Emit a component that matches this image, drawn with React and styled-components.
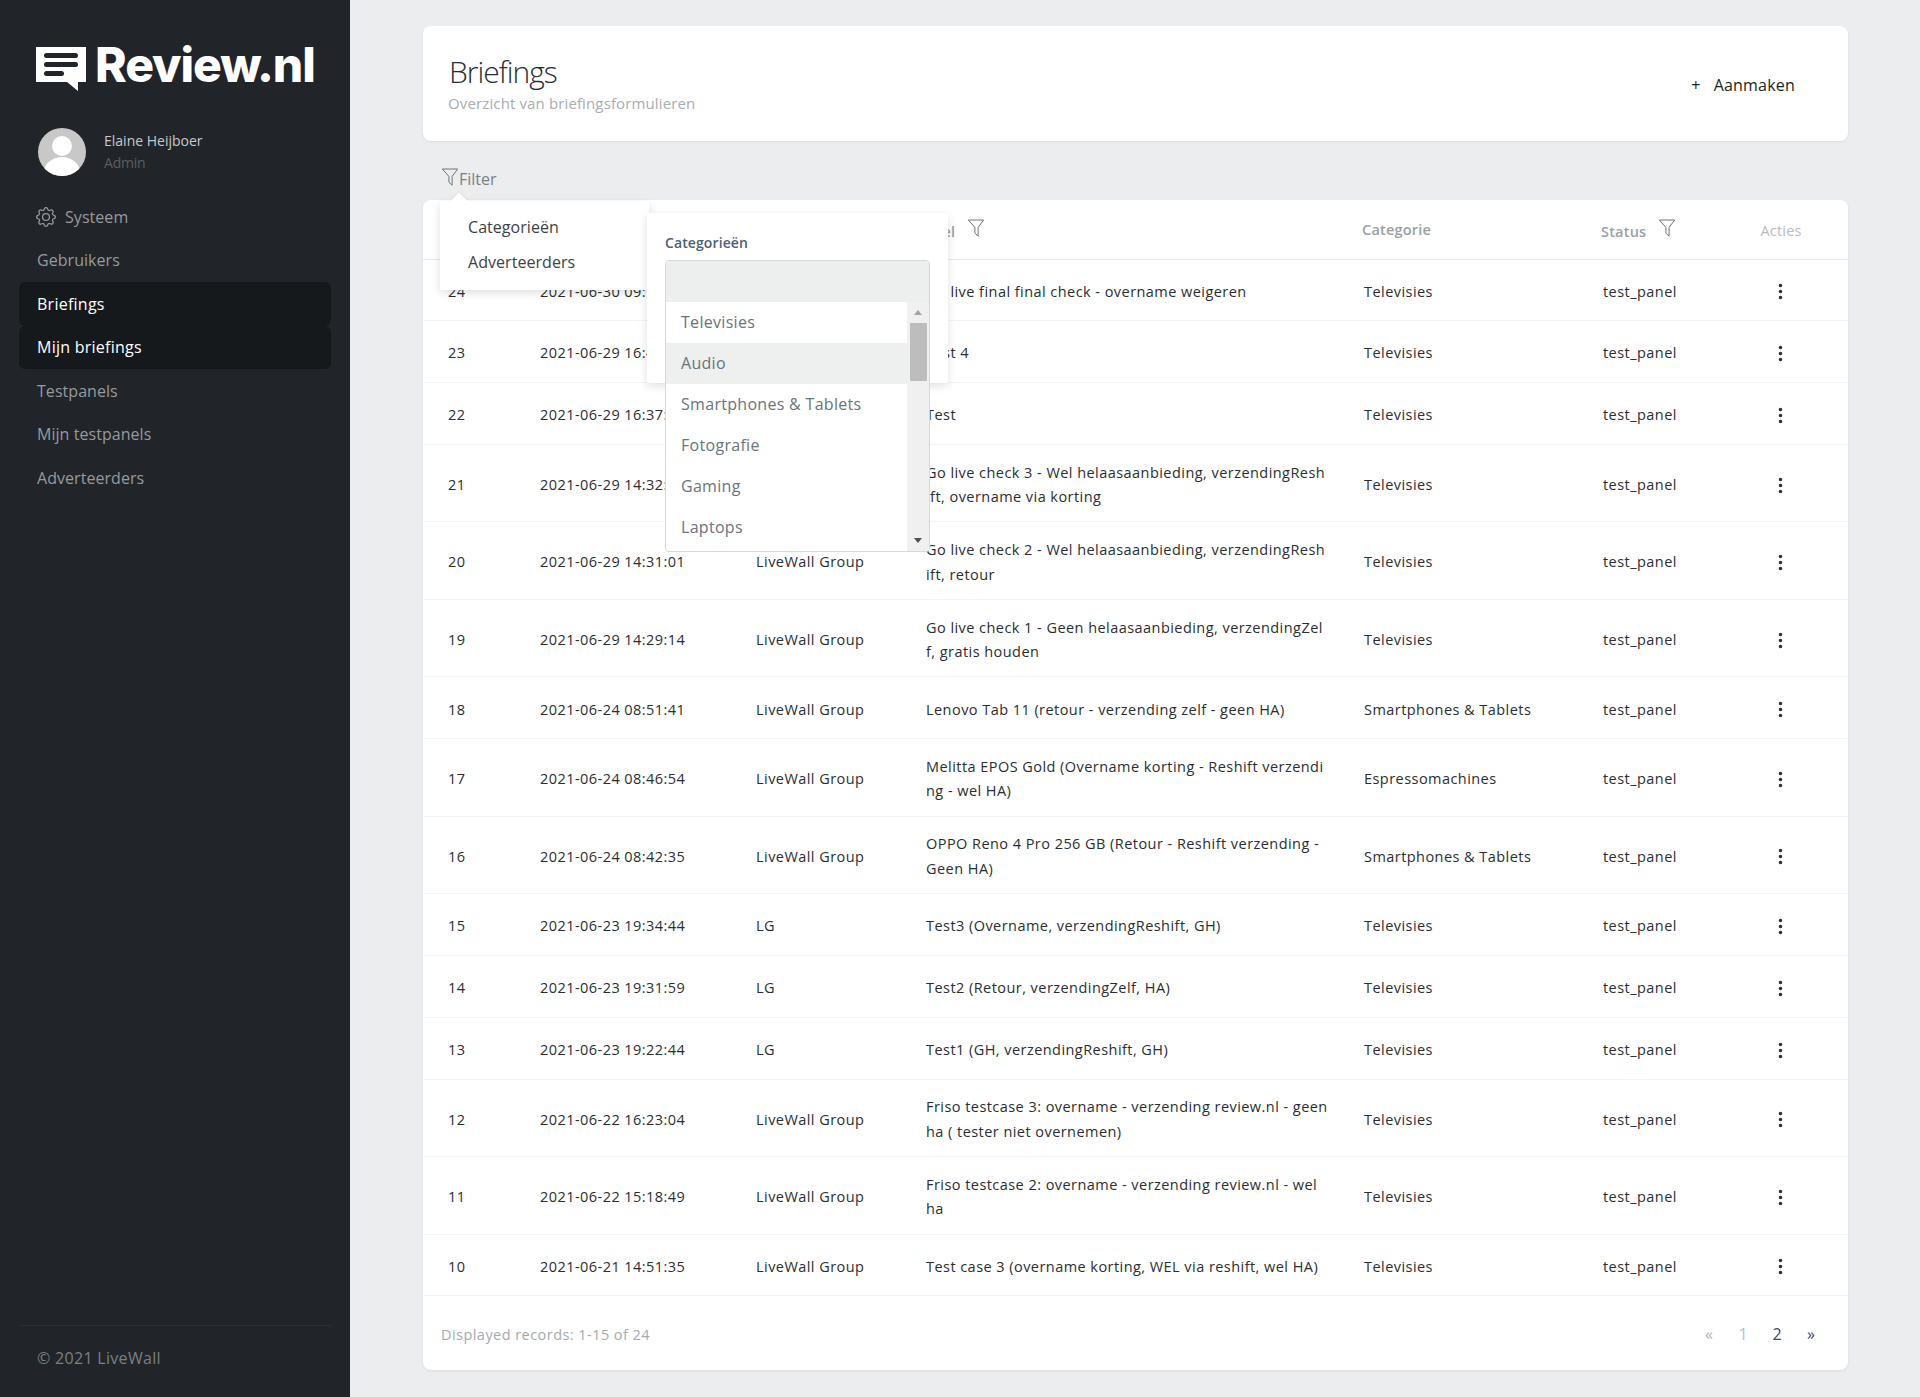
import React from 'react';
import styled, { createGlobalStyle } from 'styled-components';
import { BsGear, BsThreeDotsVertical } from 'react-icons/bs';

const FONT = '"Open Sans", "Noto Sans", sans-serif';

const GlobalStyle = createGlobalStyle`
  html, body {
    margin: 0;
    background: #ecedef;
    font-family: ${FONT};
    font-size: 14px;
    color: #2a2e33;
  }
  * { box-sizing: border-box; }
`;

const Shell = styled.div`
  display: flex;
  min-height: 1397px;
`;

/* sidebar */
const Sidebar = styled.aside`
  width: 350px;
  flex: none;
  background: #212529;
  display: flex;
  flex-direction: column;
  padding: 0 19px;
`;

const Brand = styled.div`
  display: flex;
  align-items: flex-start;
  gap: 9px;
  padding: 46px 0 0 17px;
  height: 128px;
`;

const BrandName = styled.span`
  font-family: Inter, sans-serif;
  font-weight: 800;
  font-size: 48px;
  line-height: 38px;
  color: #fff;
  letter-spacing: -1.1px;
`;

const UserBlock = styled.div`
  display: flex;
  align-items: center;
  gap: 18px;
  padding-left: 19px;
  height: 48px;
`;

const Avatar = styled.svg`
  width: 48px;
  height: 48px;
  flex: none;
`;

const UserName = styled.div`
  font-size: 14px;
  line-height: 22px;
  color: #c6c9cc;
  letter-spacing: 0;
`;

const UserRole = styled.div`
  font-size: 14px;
  line-height: 22px;
  color: #5a5e63;
  letter-spacing: -0.2px;
`;

const Nav = styled.nav`
  display: flex;
  flex-direction: column;
  margin-top: 19px;
`;

const NavItem = styled.a`
  display: flex;
  align-items: center;
  gap: 9px;
  height: 43.5px;
  padding-left: 18px;
  border-radius: 6px;
  font-size: 16px;
  letter-spacing: ${p => (p.$active ? 0.25 : 0.05)}px;
  color: ${p => (p.$active ? '#fff' : '#969a9e')};
  background: ${p => (p.$active ? '#16191c' : 'transparent')};

  svg { margin-left: -1px; }
`;

const SideFooter = styled.div`
  margin-top: auto;
  margin-bottom: 27px;
  border-top: 1px solid #2c3035;
  padding: 20px 0 0 18px;
  line-height: 24px;
  font-size: 16px;
  letter-spacing: 0.3px;
  color: #7b7f83;
`;

/* main column */
const Main = styled.main`
  flex: 1;
  min-width: 0;
  padding: 26px 72px 27px 73px;
  display: flex;
  flex-direction: column;
`;

const Card = styled.section`
  background: #fff;
  border-radius: 8px;
  box-shadow: 0 1px 3px rgba(0, 0, 0, 0.07);
`;

const HeaderCard = styled(Card)`
  height: 115px;
  padding: 0 53px 0 25px;
  display: flex;
  align-items: center;
  justify-content: space-between;
`;

const Title = styled.h1`
  margin: -1px 0 1px 1px;
  font-size: 30px;
  line-height: 38px;
  font-weight: 300;
  color: #2a2e33;
  letter-spacing: -1px;
`;

const Subtitle = styled.div`
  font-size: 15px;
  line-height: 22px;
  color: #a7adb3;
  letter-spacing: 0.13px;
`;

const CreateButton = styled.button`
  display: flex;
  align-items: center;
  gap: 13px;
  border: 0;
  background: none;
  padding: 3px 0 0;
  font: inherit;
  font-size: 16px;
  letter-spacing: 0.2px;
  color: #1c1f22;
`;

const FilterBar = styled.div`
  position: relative;
  z-index: 2;
  height: 59px;
  display: flex;
  align-items: flex-end;
  padding: 0 0 9px 18px;
`;

const FilterToggle = styled.div`
  display: flex;
  align-items: center;
  font-size: 16px;
  line-height: 24px;
  letter-spacing: 0;
  color: #7b8085;
`;

const FunnelIcon = styled.svg`
  width: 18px;
  height: 18px;
  flex: none;
  margin-top: ${p => p.$lift || 0}px;
`;

const FilterMenu = styled.div`
  position: absolute;
  left: 17px;
  top: 60px;
  width: 209px;
  height: 89px;
  padding: 9px 0 0 28px;
  background: #fff;
  border-radius: 2px;
  box-shadow: 0 3px 10px rgba(0, 0, 0, 0.13);

  &::before {
    content: '';
    position: absolute;
    left: 13px;
    top: -6px;
    width: 12px;
    height: 12px;
    background: #fff;
    transform: rotate(45deg);
    box-shadow: -1px -1px 2px rgba(0, 0, 0, 0.05);
  }
`;

const MenuEntry = styled.div`
  position: relative;
  font-size: 16px;
  line-height: 35px;
  letter-spacing: 0.05px;
  color: #3d4146;
`;

const SubMenu = styled.div`
  position: absolute;
  left: 207px;
  top: 12px;
  width: 301px;
  height: 170px;
  padding: 20px 18px 0;
  background: #fff;
  border-radius: 2px;
  box-shadow: 0 3px 10px rgba(0, 0, 0, 0.13);
`;

const FieldLabel = styled.label`
  display: block;
  font-size: 14px;
  line-height: 20px;
  font-weight: 600;
  letter-spacing: 0.1px;
  color: #4c6176;
`;

const ListBox = styled.div`
  margin-top: 7px;
  width: 265px;
  border: 1px solid #d6d9db;
  border-radius: 4px;
  background: #fff;
  overflow: hidden;
`;

const EmptyOption = styled.div`
  height: 41px;
  background: #edeeee;
`;

const ListBody = styled.div`
  display: flex;
`;

const Options = styled.div`
  flex: 1;
  padding-bottom: 3px;
`;

const Option = styled.div`
  height: 41px;
  line-height: 41px;
  padding-left: 15px;
  font-size: 16px;
  letter-spacing: 0.3px;
  color: #69747e;
  background: ${p => (p.$hover ? '#eeefef' : '#fff')};
`;

const ScrollTrack = styled.div`
  width: 22px;
  flex: none;
  background: #f0f0f0;
  display: flex;
  flex-direction: column;
  align-items: center;
`;

const ScrollArrow = styled.div`
  width: 0;
  height: 0;
  margin: ${p => (p.$down ? 'auto 0 8px' : '8px 0 0')};
  border-left: 4.5px solid transparent;
  border-right: 4.5px solid transparent;
  border-bottom: ${p => (p.$down ? '0' : '5px solid #a4a4a4')};
  border-top: ${p => (p.$down ? '5px solid #505050' : '0')};
`;

const ScrollThumb = styled.div`
  width: 17px;
  height: 58px;
  margin-top: 8px;
  background: #bdbdbd;
`;

/* table */
const TableCard = styled(Card)`
  flex: 1;
  display: flex;
  flex-direction: column;
`;

const Table = styled.table`
  width: 100%;
  table-layout: fixed;
  border-collapse: collapse;
`;

const Col = styled.col`
  width: ${p => p.$w}px;
`;

const Th = styled.th`
  height: 59px;
  padding: 0 0 0 23px;
  text-align: left;
  font-size: 14.5px;
  letter-spacing: 0.2px;
  font-weight: 600;
  color: #9aa0a6;
  border-bottom: 1px solid #e6e8ea;
`;

const ActionTh = styled(Th)`
  font-weight: 400;
  color: #b9bcc0;
  text-align: center;
  padding: 2px 20px 0 0;
`;

const ThInner = styled.span`
  display: inline-flex;
  align-items: flex-start;
  gap: 12px;
  line-height: 20px;
  span { padding-top: 5px; }
  svg { margin-top: 2px; }
`;

const Tr = styled.tr`
  height: ${p => (p.$tall ? 77.5 : 61.8)}px;
  border-bottom: 1px solid #f3f4f5;
`;

const Td = styled.td`
  padding: 4px 11px 0 25px;
  font-size: 14.5px;
  line-height: 24.5px;
  letter-spacing: 0.45px;
  color: #2a2e33;
  vertical-align: middle;
  word-break: break-all;
`;

const ActionTd = styled.td`
  text-align: center;
  padding: 7px 21px 0 0;
  color: #2d3135;
  font-size: 19px;
  line-height: 1;
`;

const TableFooter = styled.div`
  flex: 1;
  display: flex;
  align-items: center;
  justify-content: space-between;
  padding: 2px 31px 0 18px;
`;

const Records = styled.div`
  font-size: 14.5px;
  letter-spacing: 0.45px;
  color: #a5aab0;
`;

const Pager = styled.div`
  display: flex;
  gap: 22px;
`;

const PageLink = styled.a`
  width: 12px;
  text-align: center;
  font-size: 16px;
  color: ${p => p.$color};
`;

const rows = [
  [24, '2021-06-30 09:12:48', 'LiveWall Group', 'Go live final final check - overname weigeren', 'Televisies'],
  [23, '2021-06-29 16:44:02', 'LiveWall Group', 'Test 4', 'Televisies'],
  [22, '2021-06-29 16:37:19', 'LiveWall Group', 'Test', 'Televisies'],
  [21, '2021-06-29 14:32:40', 'LiveWall Group', 'Go live check 3 - Wel helaasaanbieding, verzendingReshift, overname via korting', 'Televisies', true],
  [20, '2021-06-29 14:31:01', 'LiveWall Group', 'Go live check 2 - Wel helaasaanbieding, verzendingReshift, retour', 'Televisies', true],
  [19, '2021-06-29 14:29:14', 'LiveWall Group', 'Go live check 1 - Geen helaasaanbieding, verzendingZelf, gratis houden', 'Televisies', true],
  [18, '2021-06-24 08:51:41', 'LiveWall Group', 'Lenovo Tab 11 (retour - verzending zelf - geen HA)', 'Smartphones & Tablets'],
  [17, '2021-06-24 08:46:54', 'LiveWall Group', 'Melitta EPOS Gold (Overname korting - Reshift verzending - wel HA)', 'Espressomachines', true],
  [16, '2021-06-24 08:42:35', 'LiveWall Group', 'OPPO Reno 4 Pro 256 GB (Retour - Reshift verzending - Geen HA)', 'Smartphones & Tablets', true],
  [15, '2021-06-23 19:34:44', 'LG', 'Test3 (Overname, verzendingReshift, GH)', 'Televisies'],
  [14, '2021-06-23 19:31:59', 'LG', 'Test2 (Retour, verzendingZelf, HA)', 'Televisies'],
  [13, '2021-06-23 19:22:44', 'LG', 'Test1 (GH, verzendingReshift, GH)', 'Televisies'],
  [12, '2021-06-22 16:23:04', 'LiveWall Group', 'Friso testcase 3: overname - verzending review.nl - geen ha ( tester niet overnemen)', 'Televisies', true],
  [11, '2021-06-22 15:18:49', 'LiveWall Group', 'Friso testcase 2: overname - verzending review.nl - wel ha', 'Televisies', true],
  [10, '2021-06-21 14:51:35', 'LiveWall Group', 'Test case 3 (overname korting, WEL via reshift, wel HA)', 'Televisies'],
];

const categories = ['Televisies', 'Audio', 'Smartphones & Tablets', 'Fotografie', 'Gaming', 'Laptops'];
const navItems = ['Gebruikers', 'Briefings', 'Mijn briefings', 'Testpanels', 'Mijn testpanels', 'Adverteerders'];

function Funnel({ lift }) {
  return (
    <FunnelIcon $lift={lift} viewBox="0 0 17 18" fill="none" stroke="#6f7479" strokeWidth="1">
      <path d="M.8 1h15.4L10.6 8.4v8.8L7.4 14.2V8.4L.8 1Z" />
    </FunnelIcon>
  );
}

function Logo() {
  return (
    <svg width="50" height="45" viewBox="0 0 50 45">
      <path d="M0 1h50v35h-8v9l-11-9H0Z" fill="#fff" />
      <rect x="8" y="7" width="34" height="5" rx="2.500" fill="#212529" />
      <rect x="8" y="16" width="34" height="5" rx="2.500" fill="#212529" />
      <rect x="8" y="25" width="20" height="5" rx="2.500" fill="#212529" />
    </svg>
  );
}

function App() {
  return (
    <Shell>
      <GlobalStyle />
      <Sidebar>
        <Brand>
          <Logo />
          <BrandName>Review.nl</BrandName>
        </Brand>
        <UserBlock>
          <Avatar viewBox="0 0 48 48">
            <defs>
              <clipPath id="avatar-clip"><circle cx="24" cy="24" r="24" /></clipPath>
            </defs>
            <g clipPath="url(#avatar-clip)">
              <rect width="48" height="48" fill="#c8c8c8" />
              <circle cx="24" cy="18" r="10" fill="#fff" />
              <ellipse cx="24" cy="44" rx="18" ry="15" fill="#fff" />
            </g>
          </Avatar>
          <div>
            <UserName>Elaine Heijboer</UserName>
            <UserRole>Admin</UserRole>
          </div>
        </UserBlock>
        <Nav>
          <NavItem><BsGear size={20} />Systeem</NavItem>
          {navItems.map(item => (
            <NavItem key={item} $active={item === 'Briefings' || item === 'Mijn briefings'}>{item}</NavItem>
          ))}
        </Nav>
        <SideFooter>© 2021 LiveWall</SideFooter>
      </Sidebar>

      <Main>
        <HeaderCard>
          <div>
            <Title>Briefings</Title>
            <Subtitle>Overzicht van briefingsformulieren</Subtitle>
          </div>
          <CreateButton><span>+</span>Aanmaken</CreateButton>
        </HeaderCard>

        <FilterBar>
          <FilterToggle><Funnel lift={-5} />Filter</FilterToggle>
          <FilterMenu>
            <MenuEntry>Categorieën</MenuEntry>
            <MenuEntry>Adverteerders</MenuEntry>
            <SubMenu>
              <FieldLabel>Categorieën</FieldLabel>
              <ListBox>
                <EmptyOption />
                <ListBody>
                  <Options>
                    {categories.map(c => <Option key={c} $hover={c === 'Audio'}>{c}</Option>)}
                  </Options>
                  <ScrollTrack>
                    <ScrollArrow />
                    <ScrollThumb />
                    <ScrollArrow $down />
                  </ScrollTrack>
                </ListBody>
              </ListBox>
            </SubMenu>
          </FilterMenu>
        </FilterBar>

        <TableCard>
          <Table>
            <colgroup>
              <Col $w={92} /><Col $w={216} /><Col $w={170} /><Col $w={438} /><Col $w={239} /><Col $w={156} /><Col $w={114} />
            </colgroup>
            <thead>
              <tr>
                <Th>Id</Th>
                <Th>Datum</Th>
                <Th>Adverteerder</Th>
                <Th><ThInner><span>Titel</span><Funnel /></ThInner></Th>
                <Th>Categorie</Th>
                <Th><ThInner><span>Status</span><Funnel /></ThInner></Th>
                <ActionTh>Acties</ActionTh>
              </tr>
            </thead>
            <tbody>
              {rows.map(([id, date, adv, title, cat, tall]) => (
                <Tr key={id} $tall={tall}>
                  <Td>{id}</Td>
                  <Td>{date}</Td>
                  <Td>{adv}</Td>
                  <Td>{title}</Td>
                  <Td>{cat}</Td>
                  <Td>test_panel</Td>
                  <ActionTd><BsThreeDotsVertical /></ActionTd>
                </Tr>
              ))}
            </tbody>
          </Table>
          <TableFooter>
            <Records>Displayed records: 1-15 of 24</Records>
            <Pager>
              <PageLink $color="#aab2bb">«</PageLink>
              <PageLink $color="#a9c4e4">1</PageLink>
              <PageLink $color="#3a4a5f">2</PageLink>
              <PageLink $color="#3a4a5f">»</PageLink>
            </Pager>
          </TableFooter>
        </TableCard>
      </Main>
    </Shell>
  );
}

export default App;
